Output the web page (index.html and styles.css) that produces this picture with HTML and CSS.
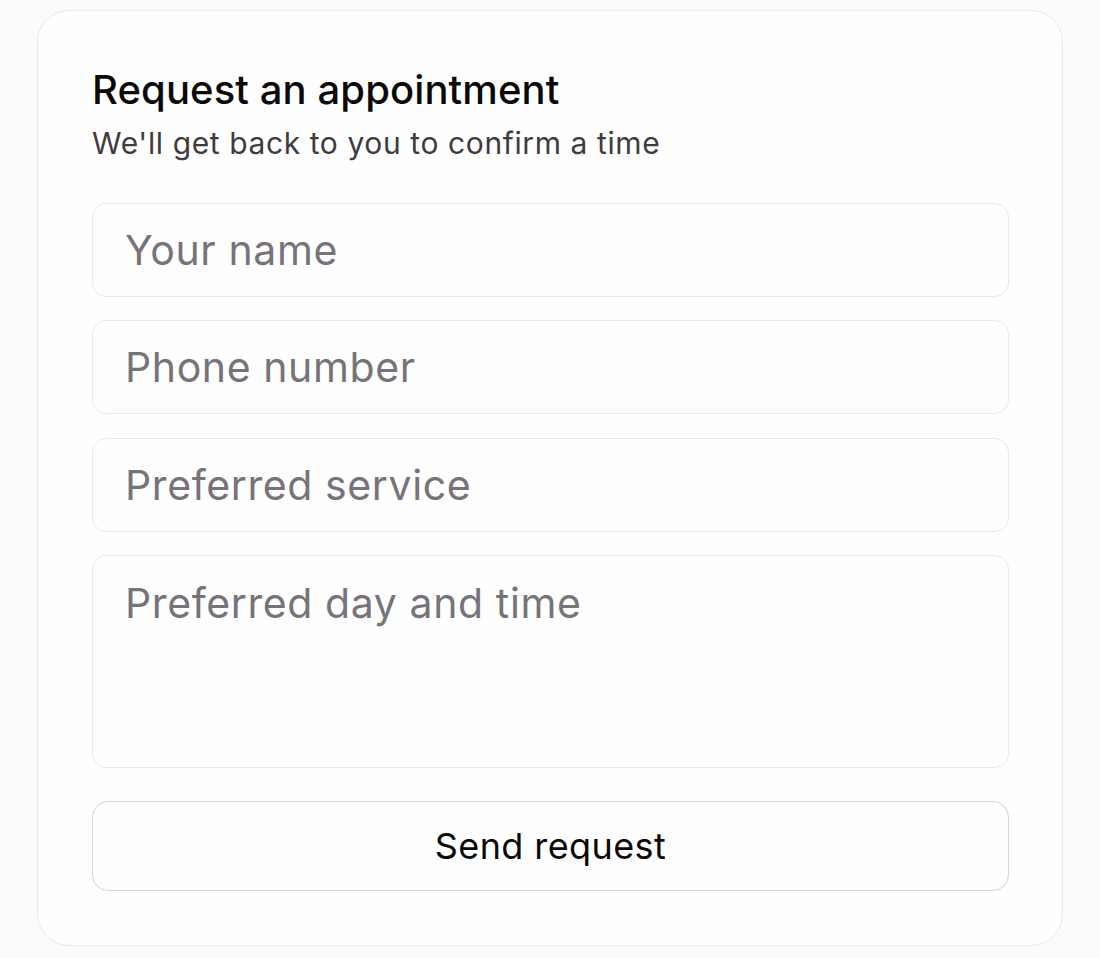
FILE: index.html
```html
<!DOCTYPE html>
<html lang="en">

<head>
    <meta charset="UTF-8">
    <meta name="viewport" content="width=device-width, initial-scale=1.0">
    <title>Request an appointment</title>
    <link rel="stylesheet" href="styles.css">
</head>

<body>
    <div class="card">
        <h1 class="title">Request an appointment</h1>
        <p class="subtitle">We'll get back to you to confirm a time</p>
        <form class="form">
            <input type="text" class="field" placeholder="Your name">
            <input type="tel" class="field" placeholder="Phone number">
            <input type="text" class="field" placeholder="Preferred service">
            <textarea class="field area" placeholder="Preferred day and time"></textarea>
            <button type="button" class="send">Send request</button>
        </form>
    </div>
</body>

</html>
```

FILE: styles.css
```css
/* Page */
body {
    margin: 0;
    padding: 10px 37px 12px 37px;
    background-color: #fcfafb;
    font-family: Inter, "Noto Sans", sans-serif;
}

/* Card */
.card {
    background-color: #fefefe;
    border: 1px solid #ebe8eb;
    border-radius: 32px;
    padding: 54px 53px 54px 54px;
}

.title {
    margin: 0;
    font-size: 40px;
    font-weight: 500;
    line-height: 50px;
    letter-spacing: 0.1px;
    color: #0a0a0a;
}

.subtitle {
    margin: 8px 0 0 0;
    font-size: 30px;
    line-height: 40px;
    color: #3f3c40;
    letter-spacing: 0.6px;
}

/* Form */
.form {
    display: flex;
    flex-direction: column;
    gap: 23.4px;
    margin-top: 40px;
}

.field {
    box-sizing: border-box;
    width: 100%;
    height: 94px;
    padding: 0 32px;
    border: 1px solid #ebe8eb;
    border-radius: 14px;
    background-color: #fefefe;
    font-family: inherit;
    font-size: 41px;
    letter-spacing: 0.6px;
    color: #111;
    outline: none;
}

.field::placeholder {
    color: #77737a;
}

.area {
    height: 213px;
    padding-top: 22px;
    resize: none;
    line-height: 50px;
}

.send {
    margin-top: 9.6px;
    height: 90px;
    border: 1px solid #d6d3d6;
    border-radius: 16px;
    background-color: #fefefe;
    font-family: inherit;
    font-size: 36px;
    letter-spacing: 0.4px;
    color: #0a0a0a;
    cursor: pointer;
}
```
